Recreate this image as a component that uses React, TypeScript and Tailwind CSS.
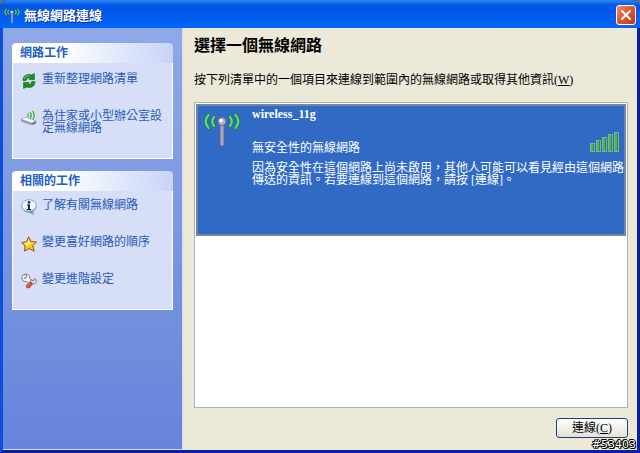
import type { ReactNode } from "react";

interface Task {
  label: string;
  icon: ReactNode;
}

const RefreshIcon = () => (
  <svg width="16" height="16" viewBox="0 0 16 16" aria-hidden="true">
    <path
      d="M2 7.4C2 3.4 4.6 1.2 8.6 1.6L10.6 2L13.4 0.6V6.6H7.8L9.2 4.8C7 4.2 5.6 5.2 5.2 7.4Z"
      fill="#1c8f22"
      stroke="#0b5a12"
      strokeWidth="0.6"
      strokeLinejoin="round"
    />
    <path
      d="M14 8.6C14 12.6 11.4 14.8 7.4 14.4L5.4 14L2.6 15.4V9.4H8.2L6.8 11.2C9 11.8 10.4 10.8 10.8 8.6Z"
      fill="#1c8f22"
      stroke="#0b5a12"
      strokeWidth="0.6"
      strokeLinejoin="round"
    />
    <path d="M3.2 6C3.6 3.6 5.6 2.6 8.4 2.9" fill="none" stroke="#6fd85c" strokeWidth="0.9" />
  </svg>
);

const RouterIcon = () => (
  <svg width="16" height="16" viewBox="0 0 16 16" aria-hidden="true">
    <path d="M0.6 9.2L5 7.4L14.8 11V13.2L11 14.8L0.6 11.2Z" fill="#a2a6b4" stroke="#6d707c" strokeWidth="0.6" />
    <path d="M0.9 9.2L5 7.6L14.4 11L11 12.4Z" fill="#fafbfe" />
    <path d="M11.6 13.6L14.4 12.4" stroke="#3c3f4c" strokeWidth="1" />
    <path
      d="M6.8 3.8Q8 5.2 6.8 7M9.2 2.6Q11.2 5.2 9.4 8M11.8 1.4Q14.4 5.2 12.2 9"
      fill="none"
      stroke="#3aa636"
      strokeWidth="1.2"
      strokeLinecap="round"
    />
  </svg>
);

const InfoIcon = () => (
  <svg width="16" height="16" viewBox="0 0 16 16" aria-hidden="true">
    <path
      d="M8 0.8C12.2 0.8 15.2 3.4 15.2 7C15.2 9.6 13.8 11.6 11.8 12.5L12.2 15.4L8.6 13.3C4 13.4 0.8 10.8 0.8 7C0.8 3.4 3.8 0.8 8 0.8Z"
      fill="#f4f9ff"
      stroke="#7e9cc0"
      strokeWidth="1"
    />
    <path
      d="M1.8 9.6C3 12 5.4 13.2 8.6 13.1L12 15L11.6 12.4C13.4 11.4 14.6 9.6 14.8 7.6C13.4 10.8 11 12.2 8 12.2C5.6 12.2 3.4 11.4 1.8 9.6Z"
      fill="#5d97c6"
    />
    <circle cx="8" cy="3.4" r="1.3" fill="#14265e" />
    <path d="M6 5.6H9V10H10.2V11.2H5.8V10H7V6.8H6Z" fill="#14265e" />
  </svg>
);

const StarIcon = () => (
  <svg width="16" height="16" viewBox="0 0 16 16" aria-hidden="true">
    <path
      d="M7.6 0.8L9.8 5.4L15.4 6L11.8 9.8L13.2 15.2L8 12.6L3.6 15.2L4 9.8L0.6 6.6L5.6 5.6Z"
      fill="#fac41c"
      stroke="#8f5a10"
      strokeWidth="1"
      strokeLinejoin="round"
    />
    <path d="M7.6 2.8L8.8 6.4L12.6 7L8 8.8L5.2 11L5.4 9L2.8 7.2L6.4 6.6Z" fill="#fff08c" />
  </svg>
);

const WrenchIcon = () => (
  <svg width="16" height="16" viewBox="0 0 16 16" aria-hidden="true">
    <path
      d="M4.6 1.2Q0.6 1.6 0.8 5Q1.4 8.8 5.2 8.4L8.4 10.4L10.6 7.6L8.8 5.4Q9 1.4 4.6 1.2L5.8 3.4L4.8 5.2L2.8 5.4"
      fill="#f1f2f6"
      stroke="#73778a"
      strokeWidth="1"
      strokeLinejoin="round"
    />
    <path
      d="M10 6.6L12.4 8L13.2 5.4Q16 6.6 15.2 9.2Q14 11.6 11.6 10.8L9.6 9Z"
      fill="#dfe1e8"
      stroke="#73778a"
      strokeWidth="0.9"
      strokeLinejoin="round"
    />
    <path d="M5.2 12.6L9.4 8.8L11.6 10.8L8 15Q5.2 15.4 5.2 12.6Z" fill="#e2402c" stroke="#9c2418" strokeWidth="0.6" />
    <path d="M6.4 13L9.4 10.2" stroke="#f9a090" strokeWidth="0.9" />
  </svg>
);

// small antenna for the caption, large one for the list entry
const AntennaIcon = ({ className }: { className: string }) => (
  <svg className={className} viewBox="0 0 36 36" aria-hidden="true">
    <path
      d="M4.5 3Q-1 9.5 4.5 16M10 5Q6.5 9.5 10 14M31.5 3Q37 9.5 31.5 16M26 5Q29.5 9.5 26 14"
      fill="none"
      stroke="#1d7a52"
      strokeWidth="3.8"
      strokeLinecap="round"
    />
    <path
      d="M4.5 3Q-1 9.5 4.5 16M10 5Q6.5 9.5 10 14M31.5 3Q37 9.5 31.5 16M26 5Q29.5 9.5 26 14"
      fill="none"
      stroke="#62d87c"
      strokeWidth="2.2"
      strokeLinecap="round"
    />
    <rect x="16" y="12" width="4" height="22" rx="1.5" fill="#a9a7c6" stroke="#62618a" strokeWidth="0.9" />
    <circle cx="18" cy="9.5" r="4" fill="#b5b1c4" stroke="#6c6788" strokeWidth="0.9" />
    <circle cx="17" cy="8.5" r="1.7" fill="#ffffff" />
  </svg>
);

const SignalIcon = () => (
  <svg width="30" height="20" viewBox="0 0 30 20" role="img" aria-label="訊號強度">
    {[8, 11, 14, 17, 19].map((height, i) => (
      <g key={height}>
        <rect x={i * 6 + 0.5} y={19.5 - height} width="4" height={height} fill="#4bb457" stroke="#7fae9c" />
        <rect x={i * 6 + 3} y={20 - height} width="1" height={height - 1} fill="#2b8a4a" />
      </g>
    ))}
  </svg>
);

const networkTasks: Task[] = [
  { label: "重新整理網路清單", icon: <RefreshIcon /> },
  { label: "為住家或小型辦公室設定無線網路", icon: <RouterIcon /> },
];

const relatedTasks: Task[] = [
  { label: "了解有關無線網路", icon: <InfoIcon /> },
  { label: "變更喜好網路的順序", icon: <StarIcon /> },
  { label: "變更進階設定", icon: <WrenchIcon /> },
];

function TaskPanel({ title, tasks, listClass }: { title: string; tasks: Task[]; listClass: string }) {
  return (
    <section>
      <h2 className="flex h-5 items-center rounded-t bg-linear-to-r from-white from-30% to-[#c8d4f6] pl-2 text-[12px] font-bold text-[#215dc6]">
        {title}
      </h2>
      <ul className={`flex flex-col gap-[17px] border border-t-0 border-white bg-[#d6dff7] px-2 ${listClass}`}>
        {tasks.map((task) => (
          <li key={task.label}>
            <a href="#" className="flex items-start gap-1 text-[#2a5cb8] hover:underline">
              <span className="mt-1 w-[17px] shrink-0">{task.icon}</span>
              <span className="pt-1 leading-3">{task.label}</span>
            </a>
          </li>
        ))}
      </ul>
    </section>
  );
}

export default function App() {
  return (
    <div className="min-h-screen bg-[#5c6f94]">
      <div
        lang="zh-TW"
        className="relative flex min-h-screen flex-col rounded-t-lg bg-[#0a1f9e] font-['Liberation_Serif','Noto_Sans_CJK_TC',serif] text-[12px] leading-4 text-black"
      >
        {/* 標題列 */}
        <header className="flex h-7 shrink-0 items-center gap-1 rounded-t-lg bg-linear-to-b from-[#2b86f5] via-[#0054e3] via-20% to-[#0366fb] px-1">
          <AntennaIcon className="mt-1 size-4" />
          <h1 className="flex-1 pt-1 text-[13px] font-bold text-white [text-shadow:1px_1px_0_#0a2a80]">
            無線網路連線
          </h1>
          <button
            type="button"
            aria-label="關閉"
            className="mt-0.5 flex size-5 items-center justify-center rounded-[3px] border border-white bg-linear-to-br from-[#eb8a6c] via-[#dc5433] to-[#c23c18]"
          >
            <svg width="12" height="12" viewBox="0 0 12 12" aria-hidden="true">
              <path d="M2 2L10 10M10 2L2 10" stroke="#fff" strokeWidth="2" strokeLinecap="round" />
            </svg>
          </button>
        </header>

        <div className="flex flex-1 border-x-3 border-b-3 border-l-[#0a50dc] border-r-[#0a1f9e] border-b-[#0a1f9e] bg-[#ece9d8]">
          {/* 工作窗格 */}
          <aside className="flex w-[180px] shrink-0 flex-col gap-3 border-r border-b border-[#d5dcf0] bg-linear-to-b from-[#8fa8e8] to-[#6684da] px-[9px] pt-[15px]">
            <TaskPanel title="網路工作" tasks={networkTasks} listClass="pt-1.5 pb-6" />
            <TaskPanel title="相關的工作" tasks={relatedTasks} listClass="pt-1 pb-5" />
          </aside>

          <main className="flex min-w-0 flex-1 flex-col pr-[9px] pb-3 pl-[11px]">
            <h2 className="pt-2 text-[16px] leading-5 font-bold">選擇一個無線網路</h2>
            <p className="mt-4 pb-3">
              按下列清單中的一個項目來連線到範圍內的無線網路或取得其他資訊(<u>W</u>)
            </p>

            <ul className="mt-0.5 flex-1 border border-[#a3b3c2] bg-white p-px">
              <li className="flex min-h-[132px] border-2 border-[#76849c] bg-[#316ac5] text-white">
                <div className="w-[54px] shrink-0 pt-1.5 pl-1.5">
                  <AntennaIcon className="size-9" />
                </div>
                <div className="min-w-0 flex-1">
                  <h3 className="font-bold">wireless_11g</h3>
                  <div className="flex items-start justify-between pt-2.5 pr-1">
                    <p className="pt-2">無安全性的無線網路</p>
                    <SignalIcon />
                  </div>
                  <p className="mt-1.5 leading-3">
                    因為安全性在這個網路上尚未啟用，其他人可能可以看見經由這個網路傳送的資訊。若要連線到這個網路，請按 [連線]。
                  </p>
                </div>
              </li>
            </ul>

            <div className="mt-2.5 flex justify-end">
              <button
                type="button"
                className="h-5 w-[72px] rounded-[3px] border border-[#1f4276] bg-linear-to-b from-white to-[#e4e1d6] leading-4"
              >
                連線(<u>C</u>)
              </button>
            </div>
          </main>
        </div>

        <span className="absolute right-1 bottom-0 font-['DejaVu_Sans',sans-serif] text-[11px] leading-4 text-white [text-shadow:1px_0_#000,-1px_0_#000,0_1px_#000,0_-1px_#000,1px_1px_#000,-1px_-1px_#000]">
          #53403
        </span>
      </div>
    </div>
  );
}
